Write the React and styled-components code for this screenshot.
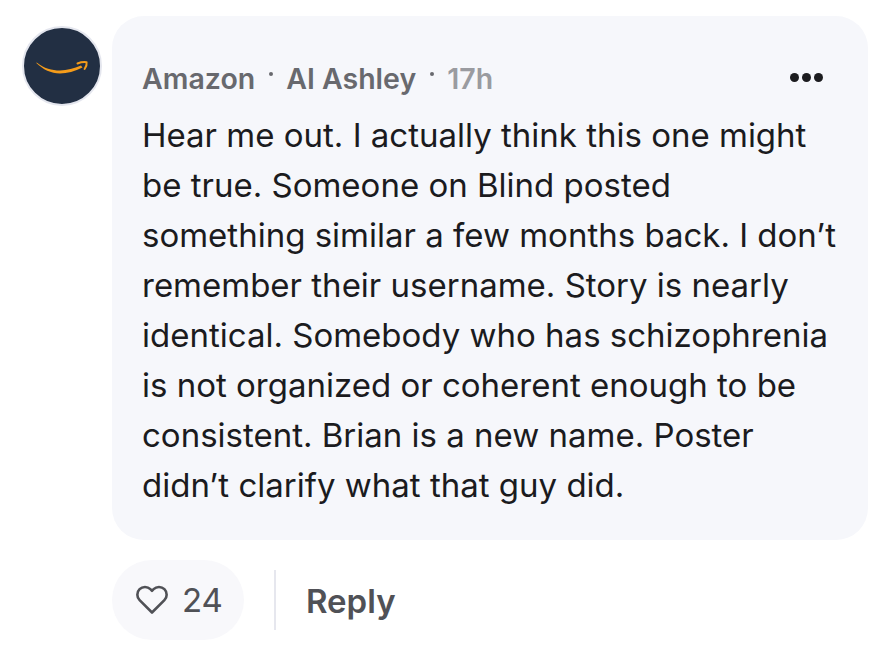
import React from 'react'
import styled, { createGlobalStyle } from 'styled-components'

const GlobalStyle = createGlobalStyle`
  html, body {
    margin: 0;
    padding: 0;
    background: #fff;
  }
  body {
    font-family: Inter, "Liberation Sans", sans-serif;
  }
`

const Comment = styled.div`
  width: 887px;
  height: 645px;
  box-sizing: border-box;
  padding: 16px 19px 0 22px;
  display: flex;
  gap: 10px;
  overflow: hidden;
`

const Avatar = styled.div`
  width: 80px;
  height: 80px;
  margin-top: 10px;
  box-sizing: border-box;
  border: 2px solid #e4e6ee;
  border-radius: 50%;
  background: #222f43;
  flex: none;
  display: flex;
  align-items: center;
  justify-content: center;
`

const Main = styled.div`
  flex: 1;
  display: flex;
  flex-direction: column;
  gap: 20px;
`

const Bubble = styled.div`
  height: 524px;
  box-sizing: border-box;
  background: #f6f7fb;
  border-radius: 32px;
  padding: 42px 30px 0;
`

const Header = styled.div`
  height: 40px;
  display: flex;
  align-items: center;
  justify-content: space-between;
`

const Meta = styled.div`
  display: flex;
  align-items: center;
  font-size: 28.5px;
  font-weight: 600;
  color: #68696e;
`

const Sep = styled.span`
  width: 4px;
  height: 4px;
  margin: -8px 13px 0 14px;
  border-radius: 50%;
  background: #68696e;
`

const Time = styled.span`
  color: #9a9ba0;
`

const MoreButton = styled.div`
  display: flex;
  gap: 3px;
  margin: -1px 15px 0 0;
`

const Dot = styled.span`
  width: 9px;
  height: 9px;
  border-radius: 50%;
  background: #1c1c1f;
`

const Body = styled.p`
  margin: 12px 0 0;
  font-size: 33px;
  line-height: 50px;
  font-weight: 400;
  color: #1b1b1e;
  white-space: nowrap;
`

const Actions = styled.div`
  display: flex;
  align-items: center;
`

const LikeButton = styled.div`
  width: 132px;
  height: 80px;
  box-sizing: border-box;
  padding-left: 24px;
  border-radius: 40px;
  background: #f8f8fb;
  display: flex;
  align-items: center;
  gap: 14px;
  font-size: 33px;
  color: #505156;
`

const Divider = styled.div`
  width: 2px;
  height: 60px;
  margin: 0 30px;
  background: #e6e7ee;
`

const Reply = styled.div`
  padding-top: 2px;
  font-size: 33px;
  font-weight: 600;
  color: #505156;
`

const lines = [
  'Hear me out. I actually think this one might',
  'be true. Someone on Blind posted',
  'something similar a few months back. I don’t',
  'remember their username. Story is nearly',
  'identical. Somebody who has schizophrenia',
  'is not organized or coherent enough to be',
  'consistent. Brian is a new name. Poster',
  'didn’t clarify what that guy did.',
]

export default function App() {
  return (
    <>
      <GlobalStyle />
      <Comment>
        <Avatar>
          <svg width="54" height="16" viewBox="0 0 54 16" fill="none">
            <path d="M1.7 4.4C9 10.5 17 12.4 25 12.4C32 12.4 39 10.8 46 7.6L47.5 9.6C40 13.6 32 15.4 25 15.4C16 15.4 8 11.5 1.3 5Z" fill="#f59c1a" />
            <path d="M42.5 5.5C45 4.5 49 3.9 51.6 4.2C52 6.4 51 9 49.6 11" stroke="#f59c1a" strokeWidth="2" strokeLinecap="round" strokeLinejoin="round" />
          </svg>
        </Avatar>
        <Main>
          <Bubble>
            <Header>
              <Meta>
                <span>Amazon</span>
                <Sep />
                <span>AI Ashley</span>
                <Sep />
                <Time>17h</Time>
              </Meta>
              <MoreButton>
                <Dot />
                <Dot />
                <Dot />
              </MoreButton>
            </Header>
            <Body>
              {lines.map((l) => (
                <React.Fragment key={l}>
                  {l}
                  <br />
                </React.Fragment>
              ))}
            </Body>
          </Bubble>
          <Actions>
            <LikeButton>
              <svg width="32" height="30" viewBox="0 0 32 30" fill="none">
                <path d="M16 27.5L3.6 15.2C0.6 12.1 0.6 7.2 3.6 4.2C6.6 1.2 11.4 1.2 14.4 4.2L16 5.8L17.6 4.2C20.6 1.2 25.4 1.2 28.4 4.2C31.4 7.2 31.4 12.1 28.4 15.2L16 27.5Z" stroke="#505156" strokeWidth="2.6" strokeLinejoin="round" />
              </svg>
              24
            </LikeButton>
            <Divider />
            <Reply>Reply</Reply>
          </Actions>
        </Main>
      </Comment>
    </>
  )
}
